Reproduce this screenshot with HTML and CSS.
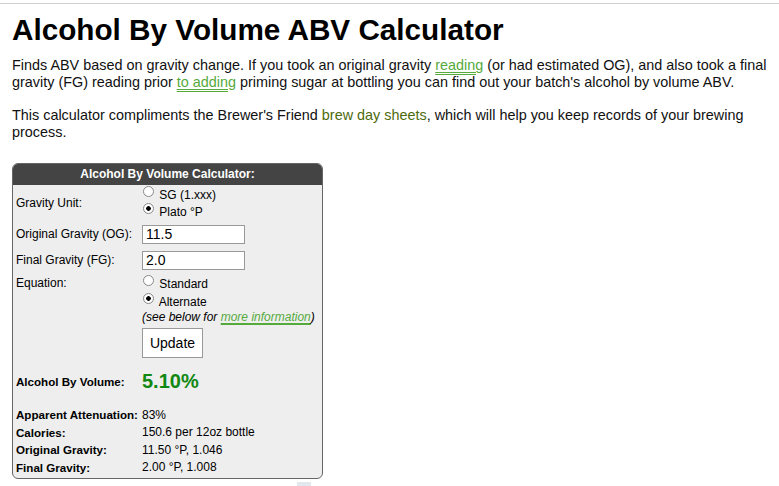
FILE: index.html
```
<!DOCTYPE html>
<html lang="en">
<head>
    <meta charset="UTF-8">
    <meta name="viewport" content="width=device-width, initial-scale=1.0">
    <title>Alcohol By Volume ABV Calculator</title>
    <link rel="stylesheet" href="styles.css">
</head>
<body>
    <div class="top-rule"></div>
    <main class="page">
        <h1 class="title">Alcohol By Volume ABV Calculator</h1>
        <p class="intro">Finds ABV based on gravity change. If you took an original gravity <a class="dbl-link" href="#">reading</a> (or had estimated OG), and also took a final gravity (FG) reading prior <a class="dbl-link" href="#">to adding</a> priming sugar at bottling you can find out your batch's alcohol by volume ABV.</p>
        <p class="intro">This calculator compliments the Brewer's Friend <a class="plain-link" href="#">brew day sheets</a>, which will help you keep records of your brewing process.</p>

        <div class="calc">
            <div class="calc-head">Alcohol By Volume Calculator:</div>
            <table class="calc-form">
                <tr class="row-unit">
                    <td class="lbl">Gravity Unit:</td>
                    <td>
                        <label class="opt"><input type="radio" name="unit"> SG (1.xxx)</label>
                        <label class="opt"><input type="radio" name="unit" checked> Plato °P</label>
                    </td>
                </tr>
                <tr class="row-input">
                    <td class="lbl">Original Gravity (OG):</td>
                    <td><input class="field" type="text" value="11.5"></td>
                </tr>
                <tr class="row-input">
                    <td class="lbl">Final Gravity (FG):</td>
                    <td><input class="field" type="text" value="2.0"></td>
                </tr>
                <tr class="row-eq">
                    <td class="lbl top">Equation:</td>
                    <td>
                        <label class="opt"><input type="radio" name="eq"> Standard</label>
                        <label class="opt"><input type="radio" name="eq" checked> Alternate</label>
                        <div class="note">(see below for <a class="note-link" href="#">more information</a>)</div>
                        <button class="update" type="button">Update</button>
                    </td>
                </tr>
                <tr class="row-abv">
                    <td class="lbl strong">Alcohol By Volume:</td>
                    <td class="abv">5.10%</td>
                </tr>
                <tr class="row-stat first">
                    <td class="lbl strong">Apparent Attenuation:</td>
                    <td>83%</td>
                </tr>
                <tr class="row-stat">
                    <td class="lbl strong">Calories:</td>
                    <td>150.6 per 12oz bottle</td>
                </tr>
                <tr class="row-stat">
                    <td class="lbl strong">Original Gravity:</td>
                    <td>11.50 °P, 1.046</td>
                </tr>
                <tr class="row-stat">
                    <td class="lbl strong">Final Gravity:</td>
                    <td>2.00 °P, 1.008</td>
                </tr>
            </table>
        </div>
        <div class="peek"></div>
    </main>
</body>
</html>
```

FILE: styles.css
```
body{
    margin: 0;
    background: #fff;
    color: #111;
    font-family: "Liberation Sans", Arial, sans-serif;
}

.top-rule{
    margin-top: 3px;
    border-top: 1px solid #d0d0d0;
}

.page{
    padding: 0 4px 0 12px;
}

.title{
    margin: 9px 0 0 0;
    font-size: 29.7px;
    line-height: 34px;
    font-weight: bold;
    color: #000;
}

.intro{
    margin: 10px 0 17px 0;
    font-size: 14.4px;
    line-height: 16.5px;
}

.dbl-link{
    color: #55aa3c;
    text-decoration: underline double #55aa3c;
    text-underline-offset: 2px;
}

.plain-link{
    color: #4e6a0e;
    text-decoration: none;
}

/* calculator box */
.calc{
    width: 309px;
    margin-top: 23px;
    padding-bottom: 2px;
    border: 1px solid #666;
    border-radius: 6px;
    background: #eeeeee;
    overflow: hidden;
}

.calc-head{
    height: 21px;
    line-height: 21px;
    background: #444;
    color: #fff;
    text-align: center;
    font-weight: bold;
    font-size: 12px;
}

.calc-form{
    border-collapse: collapse;
    font-size: 12px;
    color: #000;
}

.calc-form td{
    padding: 0;
    vertical-align: middle;
}

.lbl{
    width: 126px;
    padding-left: 3px !important;
}

.lbl.top{
    vertical-align: top !important;
    padding-top: 3px !important;
}

.lbl.strong{
    font-weight: bold;
    font-size: 11.6px;
}

.row-unit td{
    height: 36px;
}

.row-input td{
    height: 26px;
}

.row-eq td{
    padding-top: 2px;
    padding-bottom: 10px;
}

.opt{
    display: block;
    line-height: 16px;
}

.opt input{
    appearance: none;
    -webkit-appearance: none;
    width: 11px;
    height: 11px;
    margin: 0 2px 0 1px;
    border: 1px solid #888;
    border-radius: 50%;
    background: #fff;
    vertical-align: 2px;
}

.opt input:checked{
    background: radial-gradient(circle, #000 2px, #fff 2.6px);
}

.row-eq .opt + .opt{
    margin-top: 1px;
}

.note{
    font-style: italic;
    line-height: 14px;
    margin-bottom: 4px;
}

.note-link{
    color: #55aa3c;
    text-decoration: underline #55aa3c;
    text-decoration-thickness: 2px;
    text-underline-offset: 2px;
}

.field{
    width: 95px;
    height: 15px;
    padding: 1px 3px;
    border: 1px solid #999;
    background: #fff;
    font-family: inherit;
    font-size: 14px;
    color: #000;
}

.update{
    width: 61px;
    height: 30px;
    padding: 0;
    border: 1px solid #999;
    background: #fff;
    font-family: inherit;
    font-size: 14px;
    color: #000;
}

.row-abv td{
    height: 26px;
}

.abv{
    font-size: 20px;
    font-weight: bold;
    color: #118811;
}

.row-stat td{
    height: 17.5px;
}

.row-stat.first td{
    padding-top: 12px;
}

.peek{
    width: 14px;
    height: 6px;
    margin: 3px 0 0 285px;
    background: #e2e8ee;
}
```
